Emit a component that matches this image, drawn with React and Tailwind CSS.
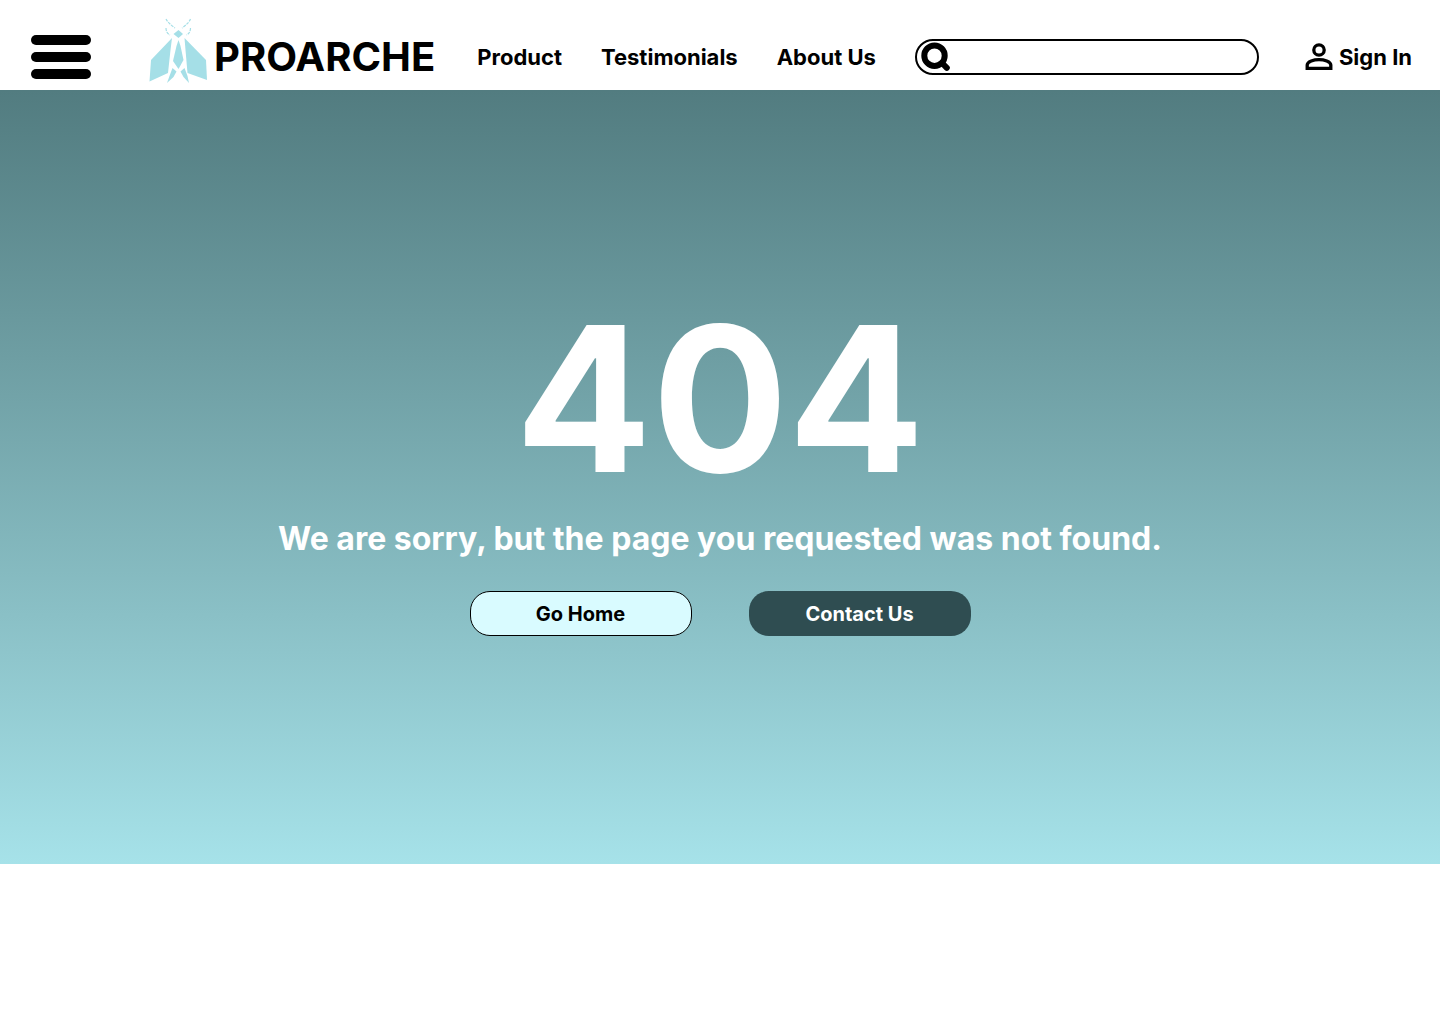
import React from "react";

const navLinks = ["Product", "Testimonials", "About Us"];

function MenuIcon() {
  return (
    <svg viewBox="0 0 60 44" className="h-11 w-15" aria-hidden="true">
      <rect width="60" height="10" rx="5" />
      <rect y="17" width="60" height="10" rx="5" />
      <rect y="34" width="60" height="10" rx="5" />
    </svg>
  );
}

function MothLogo() {
  return (
    <svg viewBox="0 0 60 66" className="h-[66px] w-15 shrink-0" fill="#a5dfe7" aria-hidden="true">
      <path d="M24 20 L22.5 32 L20 55 L1.5 63.5 L3 42 Z" />
      <path d="M36.5 20 L37.5 32 L39.5 55 L59 62 L58 42 Z" />
      <path d="M30.5 22 L32.5 28 L35.5 42 L30.5 51 L25 43 L28.5 28 Z" />
      <path d="M25.5 16 L30.5 12 L35 16 L30.5 20 Z" />
      <path d="M24.5 50 L28.5 53.5 L25.5 59 L19 65 L21.5 58 Z" />
      <path d="M36.5 50 L32.5 53.5 L35.5 59 L41 65 L39.5 58 Z" />
      <g fill="none" stroke="#a5dfe7" strokeWidth="1.2" strokeDasharray="3 1">
        <path d="M18 1 Q20 5 27 10" />
        <path d="M42.5 1 Q41 5 34 10" />
        <path d="M18 10 Q18 15 22 17" />
        <path d="M42.5 10 Q42.5 15 38.5 17" />
      </g>
    </svg>
  );
}

function SearchIcon() {
  return (
    <svg viewBox="0 0 30 30" className="h-[30px] w-[30px] shrink-0" fill="none" stroke="black" aria-hidden="true">
      <circle cx="13.5" cy="13.7" r="10.2" strokeWidth="6" />
      <path d="M21 21 L25.8 25.8" strokeWidth="6" strokeLinecap="round" />
    </svg>
  );
}

function PersonIcon() {
  return (
    <svg viewBox="0 0 28 28" className="h-7 w-7" fill="none" stroke="black" strokeWidth="3.3" aria-hidden="true">
      <circle cx="14" cy="7" r="5.2" />
      <path d="M2.2 25.4 V22 C2.2 18.4 9 16.6 14 16.6 S25.8 18.4 25.8 22 V25.4 Z" />
    </svg>
  );
}

export default function App() {
  return (
    <div className="min-h-screen bg-white font-['Inter',sans-serif] text-black">
      <header className="flex items-center pt-6 pr-7 pl-[31px]">
        <button type="button" aria-label="Open menu" className="mr-[57px] shrink-0">
          <MenuIcon />
        </button>
        <a href="#home" className="mr-[42px] -mt-6 flex h-[90px] items-end gap-1.5 pb-1.5">
          <MothLogo />
          <span className="text-[40px] leading-[54px] font-bold">PROARCHE</span>
        </a>
        <nav className="mr-[39px] flex gap-[39px]">
          {navLinks.map((label) => (
            <a key={label} href="#nav" className="text-[22px] leading-8 font-bold whitespace-nowrap">
              {label}
            </a>
          ))}
        </nav>
        <label className="mr-[46px] flex h-9 min-w-0 flex-1 items-center rounded-full border-2 border-black pl-1">
          <SearchIcon />
          <input type="search" aria-label="Search" className="min-w-0 flex-1 bg-transparent px-2 outline-none" />
        </label>
        <a href="#signin" className="flex items-center gap-1.5 text-[22px] leading-8 font-bold whitespace-nowrap">
          <PersonIcon />
          Sign In
        </a>
      </header>

      <main className="flex flex-col items-center bg-linear-to-b from-[#527c80] to-[#a6e2e9] px-6 pt-[189px] pb-[228px] text-center">
        <h1 className="text-[202px] leading-60 font-bold text-white">404</h1>
        <p className="text-[32px] leading-10 font-bold text-white">
          We are sorry, but the page you requested was not found.
        </p>
        <div className="mt-8 flex gap-[57px] text-xl font-bold">
          <button type="button" className="h-[45px] w-[222px] rounded-[20px] border border-black bg-[#d9fbff]">
            Go Home
          </button>
          <button type="button" className="h-[45px] w-[222px] rounded-[20px] bg-[#2f4d51] text-white">
            Contact Us
          </button>
        </div>
      </main>
    </div>
  );
}
